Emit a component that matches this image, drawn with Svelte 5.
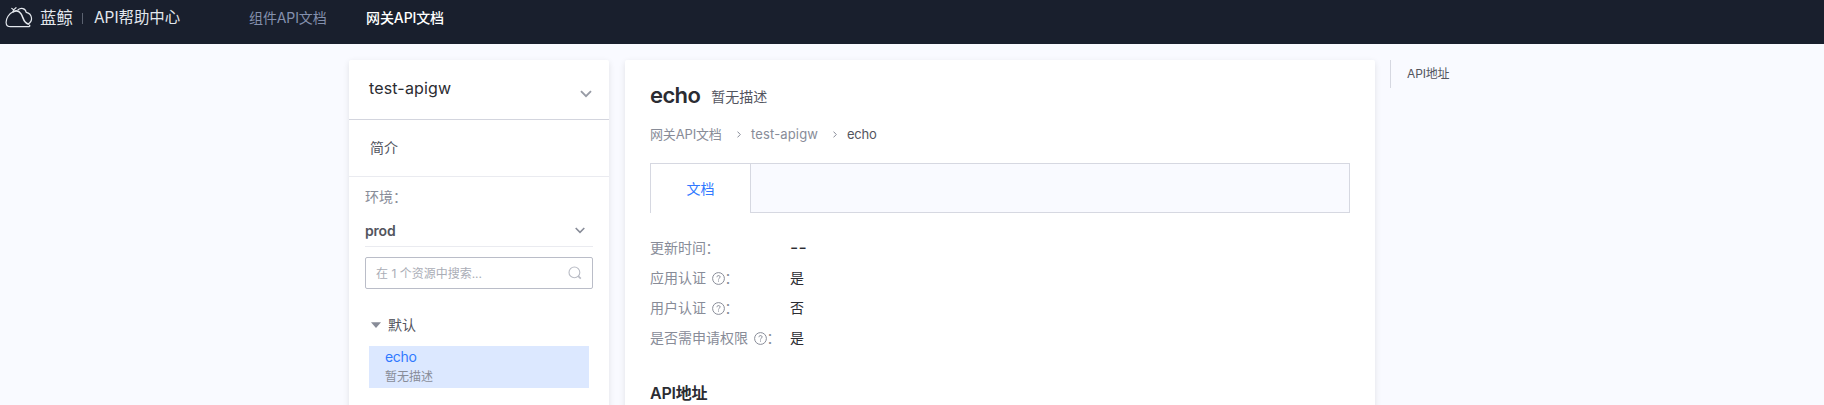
<script>
  const fields = [
    { label: '更新时间', value: '--', help: false },
    { label: '应用认证', value: '是', help: true },
    { label: '用户认证', value: '否', help: true },
    { label: '是否需申请权限', value: '是', help: true }
  ];
</script>

<header class="topbar">
  <div class="brand">
    <svg class="logo" width="28" height="21" viewBox="0 0 28 21" fill="none" stroke="#e3e7ed" stroke-width="1.2" stroke-linecap="round" stroke-linejoin="round">
      <path d="M6.8 1.4 8.6 2.9 11 .7M8.6 3 8 5M8.2 4.8C4 6.6 1 11.4 1.1 15.4c.1 2.9 1.7 4.3 4.5 4.3H23c1.6 0 2.2-.7 1.6-1.6"/>
      <path d="M8.2 4.8c2.8-1.7 5.8-.8 7.7 1.8 2.6 3.5 2.2 9.2 7.3 10.4" stroke-width="1.6"/>
      <path d="M23.2 17c2.1-1.3 3.6-3.3 3.3-6-.3-2.8-2.5-5.1-5.3-5.7-.6-4.1-5.2-5-8.2-2.5"/>
    </svg>
    <span class="brand-name">蓝鲸</span>
    <i></i>
    <span class="product">API帮助中心</span>
  </div>
  <nav>
    <a>组件API文档</a>
    <a class="current">网关API文档</a>
  </nav>
</header>

<div class="page">
  <aside class="side">
    <div class="gateway">
      <span>test-apigw</span>
      <svg width="12" height="8" viewBox="0 0 12 8"><path d="M1 1.2 6 6.2 11 1.2" fill="none" stroke="#979ba5" stroke-width="1.9"/></svg>
    </div>
    <div class="intro">简介</div>
    <div class="env-label">环境：</div>
    <div class="env">
      <b>prod</b>
      <svg width="10" height="7" viewBox="0 0 10 7"><path d="M.7 1 5 5.3 9.3 1" fill="none" stroke="#888c98" stroke-width="1.6"/></svg>
    </div>
    <div class="search">
      <span>在 1 个资源中搜索...</span>
      <svg width="14" height="14" viewBox="0 0 14 14" fill="none" stroke="#b9bcc5" stroke-width="1.1"><circle cx="6.4" cy="6.4" r="5.4"/><path d="m10.2 10.2 2.6 2.5" stroke-width="1.6"/></svg>
    </div>
    <div class="group">
      <svg width="10" height="6" viewBox="0 0 10 6"><path d="M0 .3h10L5 6z" fill="#888c98"/></svg>
      <span>默认</span>
    </div>
    <div class="resource">
      <p class="res-name">echo</p>
      <p class="res-desc">暂无描述</p>
    </div>
  </aside>

  <main>
    <h1>echo<small>暂无描述</small></h1>
    <div class="crumbs">
      <span class="root">网关API文档</span>
      <svg width="4" height="7" viewBox="0 0 4 7"><path d="M.5.6 3.3 3.5.5 6.4" fill="none" stroke="#888c98"/></svg>
      <span class="gw">test-apigw</span>
      <svg width="4" height="7" viewBox="0 0 4 7"><path d="M.5.6 3.3 3.5.5 6.4" fill="none" stroke="#888c98"/></svg>
      <span class="leaf">echo</span>
    </div>
    <div class="tabs"><div class="tab">文档</div><div class="rest"></div></div>
    <dl>
      {#each fields as field}
        <div class="field">
          <dt>
            {field.label}{#if field.help}<svg width="13" height="13" viewBox="0 0 13 13" fill="none" stroke="#888c98"><circle cx="6.5" cy="6.5" r="5.9"/><path d="M4.9 5.2c0-2.1 3.2-2.1 3.2-.2 0 1.2-1.6 1.2-1.6 2.5M6.5 8.5v1.1"/></svg>{/if}<span class="colon">：</span>
          </dt>
          <dd class:empty={field.value === '--'}>{field.value}</dd>
        </div>
      {/each}
    </dl>
    <h2>API地址</h2>
  </main>

  <div class="toc">API地址</div>
</div>

<style>
  :global(body) {
    background: #f9faff;
    overflow: hidden;
    font: 14px/20px Inter, "Noto Sans CJK SC", sans-serif;
    color: #53555e;
  }
  .topbar {
    height: 44px;
    box-sizing: border-box;
    background: #191f2d;
    display: flex;
    align-items: flex-start;
  }
  .brand {
    width: 249px;
    display: flex;
    align-items: center;
    padding: 7px 0 0 5px;
    box-sizing: border-box;
    color: #e3e7ed;
    height: 28px;
  }
  .logo { flex: none; }
  .brand-name { margin-left: 7px; font-size: 16.5px; }
  .brand i { width: 1px; height: 11px; background: #5b6270; margin: 1px 11px 0 9px; }
  .product { font-size: 15.4px; }
  nav { display: flex; gap: 40px; padding-top: 8px; color: #8490ad; }
  nav a { width: 77px; white-space: nowrap; letter-spacing: -.1px; }
  nav .current { color: #fff; font-weight: 500; }
  .page { display: flex; align-items: flex-start; padding: 16px 0 0 349px; }
  .side, main {
    height: 360px;
    box-sizing: border-box;
    background: #fff;
    border-radius: 2px 2px 0 0;
    box-shadow: 0 2px 6px rgba(0, 0, 0, .1);
  }
  .side { width: 260px; }
  .gateway {
    height: 60px;
    box-sizing: border-box;
    border-bottom: 1px solid #d3d5de;
    padding: 18px 17px 0 20px;
    display: flex;
    justify-content: space-between;
    font-size: 16px;
    letter-spacing: .15px;
    color: #2b2c32;
  }
  .gateway svg { margin-top: 12px; }
  .intro { height: 57px; box-sizing: border-box; border-bottom: 1px solid #eaebf0; padding: 18px 21px; }
  .env-label { padding: 10px 16px 0; color: #888c98; }
  .env {
    margin: 10px 16px 0;
    height: 30px;
    box-sizing: border-box;
    border-bottom: 1px solid #eaebf0;
    display: flex;
    align-items: center;
    justify-content: space-between;
    padding: 0 8px 2px 0;
  }
  .env b { font-weight: 600; letter-spacing: -.2px; }
  .search {
    margin: 10px 16px 0;
    height: 32px;
    box-sizing: border-box;
    border: 1px solid #babdc8;
    border-radius: 2px;
    display: flex;
    align-items: center;
    justify-content: space-between;
    padding: 0 10px;
    font-size: 12px;
    color: #aaadb6;
  }
  .search span { padding-top: 1px; }
  .group { display: flex; align-items: center; gap: 7px; margin: 26px 0 0 22px; }
  .resource { margin: 11px 20px 0; height: 42px; background: #dce8ff; padding-left: 16px; overflow: hidden; }
  p { margin: 0; }
  .res-name { color: #3079ff; padding-top: 1px; letter-spacing: -.35px; }
  .res-desc { font-size: 12px; color: #888c98; }
  main { width: 750px; margin-left: 16px; padding: 20px 25px 0; }
  h1 { margin: 0; font-size: 22px; line-height: 30px; font-weight: 600; letter-spacing: -.6px; color: #2b2c32; display: flex; }
  small { font-size: 14px; font-weight: 400; letter-spacing: 0; color: #53555e; margin-left: 11px; padding-top: 2px; }
  .crumbs { display: flex; align-items: center; margin-top: 12px; height: 20px; font-size: 13px; color: #888c98; }
  .root { width: 87px; white-space: nowrap; letter-spacing: -.15px; }
  .gw { width: 82px; margin-left: 10px; letter-spacing: .15px; }
  .leaf { margin-left: 10px; color: #53555e; letter-spacing: -.25px; }
  .tabs { display: flex; height: 50px; margin-top: 19px; }
  .tab {
    width: 101px;
    box-sizing: border-box;
    border: 1px solid #d6d8e1;
    border-bottom: 0;
    text-align: center;
    padding-top: 15px;
    color: #3079ff;
  }
  .rest { flex: 1; border: 1px solid #d6d8e1; border-left: 0; background: #f9faff; }
  dl { margin: 20px 0 0; }
  .field { display: flex; height: 30px; line-height: 30px; }
  dt { width: 140px; color: #888c98; white-space: nowrap; display: flex; align-items: center; }
  dt svg { margin: 1px 0 0 6px; flex: none; }
  .colon { margin-left: -.5px; }
  dd { margin: 0; color: #2b2c32; }
  .empty { font-size: 18px; letter-spacing: .2px; }
  h2 { margin: 29px 0 0; font-size: 16px; line-height: 22px; font-weight: 600; letter-spacing: -.2px; color: #2b2c32; }
  .toc { margin-left: 15px; height: 28px; border-left: 1px solid #d6d8e1; padding-left: 16px; font-size: 12px; line-height: 28px; letter-spacing: -.15px; }
</style>
